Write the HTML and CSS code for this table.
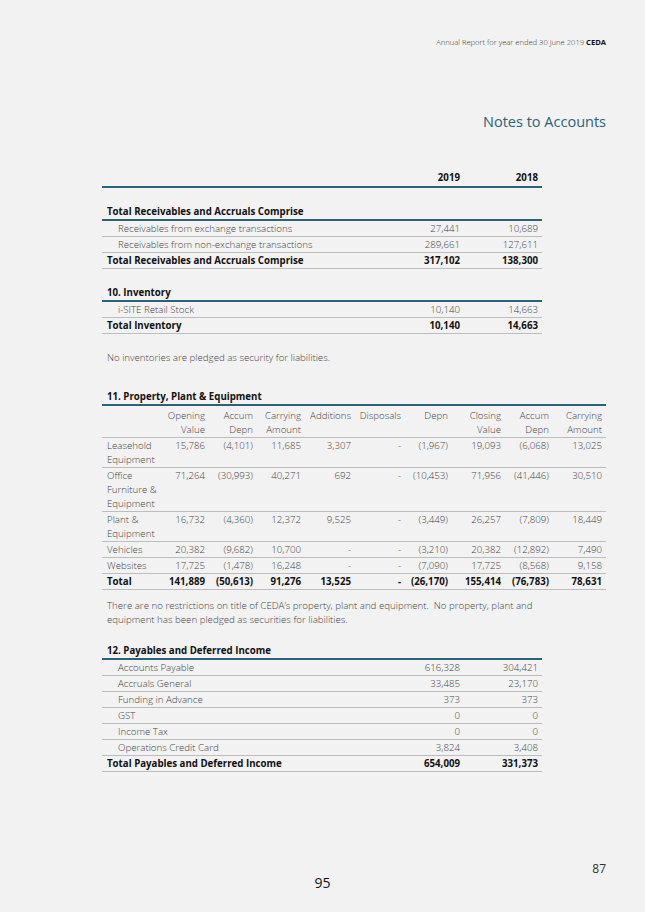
FILE: index.html
```html
<!DOCTYPE html>
<html>
<head>
<meta charset="utf-8">
<link rel="stylesheet" href="styles.css">
</head>
<body>
<div class="page">
  <div class="running">Annual Report for year ended 30 June 2019 <b>CEDA</b></div>
  <h1 class="title">Notes to Accounts</h1>

  <table class="fin first">
    <colgroup><col class="c-label"><col class="c-num"><col class="c-num"></colgroup>
    <thead>
      <tr class="yr"><th></th><th>2019</th><th>2018</th></tr>
    </thead>
  </table>

  <div class="sec-title gap-a">Total Receivables and Accruals Comprise</div>
  <table class="fin">
    <colgroup><col class="c-label"><col class="c-num"><col class="c-num"></colgroup>
    <tbody>
      <tr><td class="ind">Receivables from exchange transactions</td><td>27,441</td><td>10,689</td></tr>
      <tr><td class="ind">Receivables from non-exchange transactions</td><td>289,661</td><td>127,611</td></tr>
      <tr class="tot"><td>Total Receivables and Accruals Comprise</td><td>317,102</td><td>138,300</td></tr>
    </tbody>
  </table>

  <div class="sec-title gap-b">10. Inventory</div>
  <table class="fin">
    <colgroup><col class="c-label"><col class="c-num"><col class="c-num"></colgroup>
    <tbody>
      <tr><td class="ind">i-SITE Retail Stock</td><td>10,140</td><td>14,663</td></tr>
      <tr class="tot"><td>Total Inventory</td><td>10,140</td><td>14,663</td></tr>
    </tbody>
  </table>

  <p class="note note-a">No inventories are pledged as security for liabilities.</p>

  <div class="sec-title wide gap-c">11. Property, Plant &amp; Equipment</div>
  <table class="ppe">
    <colgroup>
      <col class="p-label"><col class="p49"><col class="p48"><col class="p48"><col class="p50"><col class="p50"><col class="p47"><col class="p53"><col class="p48"><col class="p53">
    </colgroup>
    <thead>
      <tr><th></th><th>Opening<br>Value</th><th>Accum<br>Depn</th><th>Carrying<br>Amount</th><th>Additions</th><th>Disposals</th><th>Depn</th><th>Closing<br>Value</th><th>Accum<br>Depn</th><th>Carrying<br>Amount</th></tr>
    </thead>
    <tbody>
      <tr><td>Leasehold Equipment</td><td>15,786</td><td>(4,101)</td><td>11,685</td><td>3,307</td><td>-</td><td>(1,967)</td><td>19,093</td><td>(6,068)</td><td>13,025</td></tr>
      <tr><td>Office Furniture &amp; Equipment</td><td>71,264</td><td>(30,993)</td><td>40,271</td><td>692</td><td>-</td><td>(10,453)</td><td>71,956</td><td>(41,446)</td><td>30,510</td></tr>
      <tr><td>Plant &amp; Equipment</td><td>16,732</td><td>(4,360)</td><td>12,372</td><td>9,525</td><td>-</td><td>(3,449)</td><td>26,257</td><td>(7,809)</td><td>18,449</td></tr>
      <tr><td>Vehicles</td><td>20,382</td><td>(9,682)</td><td>10,700</td><td>-</td><td>-</td><td>(3,210)</td><td>20,382</td><td>(12,892)</td><td>7,490</td></tr>
      <tr><td>Websites</td><td>17,725</td><td>(1,478)</td><td>16,248</td><td>-</td><td>-</td><td>(7,090)</td><td>17,725</td><td>(8,568)</td><td>9,158</td></tr>
      <tr class="tot"><td>Total</td><td>141,889</td><td>(50,613)</td><td>91,276</td><td>13,525</td><td>-</td><td>(26,170)</td><td>155,414</td><td>(76,783)</td><td>78,631</td></tr>
    </tbody>
  </table>

  <p class="note note-b">There are no restrictions on title of CEDA’s property, plant and equipment.&nbsp; No property, plant and equipment has been pledged as securities for liabilities.</p>

  <div class="sec-title gap-d">12. Payables and Deferred Income</div>
  <table class="fin">
    <colgroup><col class="c-label"><col class="c-num"><col class="c-num"></colgroup>
    <tbody>
      <tr><td class="ind">Accounts Payable</td><td>616,328</td><td>304,421</td></tr>
      <tr><td class="ind">Accruals General</td><td>33,485</td><td>23,170</td></tr>
      <tr><td class="ind">Funding in Advance</td><td>373</td><td>373</td></tr>
      <tr><td class="ind">GST</td><td>0</td><td>0</td></tr>
      <tr><td class="ind">Income Tax</td><td>0</td><td>0</td></tr>
      <tr><td class="ind">Operations Credit Card</td><td>3,824</td><td>3,408</td></tr>
      <tr class="tot"><td>Total Payables and Deferred Income</td><td>654,009</td><td>331,373</td></tr>
    </tbody>
  </table>

  <div class="folios">
    <div class="folio-print">87</div>
    <div class="folio-doc">95</div>
  </div>
</div>
</body>
</html>
```
FILE: styles.css
```css
html, body {
  margin: 0;
  padding: 0;
  background: #f2f2f2;
}
body {
  font-family: "Open Sans", "DejaVu Sans", sans-serif;
  color: #444;
}
.page {
  width: 645px;
  height: 912px;
  box-sizing: border-box;
  padding: 37px 39px 0 102px;
  position: relative;
}
.running {
  text-align: right;
  font-size: 7.6px;
  line-height: 10px;
  font-weight: 300;
  color: #3a3a3a;
}
.running b {
  font-weight: 700;
  color: #111;
}
.title {
  margin: 65px 0 0 0;
  text-align: right;
  font-size: 14.5px;
  line-height: 20px;
  font-weight: 400;
  color: #2d6275;
}
.fin {
  width: 440px;
  border-collapse: separate;
  border-spacing: 0;
  table-layout: fixed;
  font-size: 9.7px;
}
.fin.first {
  margin-top: 38px;
}
.c-label { width: 284px; }
.c-num { width: 78px; }
.fin td, .fin th {
  padding: 0 4px 0 5px;
  height: 15px;
  line-height: 15px;
  border-bottom: 1px solid #bdbdbd;
  text-align: right;
  font-weight: 300;
  color: #444;
  white-space: nowrap;
}
.fin td:first-child, .fin th:first-child { text-align: left; }
.fin td.ind { padding-left: 16px; }
.fin .yr th {
  font-weight: 700;
  color: #111;
  border-bottom: 2px solid #2d6275;
  height: 16px;
  line-height: 16px;
}
.fin .tot td {
  font-weight: 700;
  color: #111;
}
.sec-title {
  width: 440px;
  box-sizing: border-box;
  padding-left: 5px;
  font-size: 9.7px;
  line-height: 14px;
  font-weight: 700;
  color: #111;
  border-bottom: 2px solid #2d6275;
}
.sec-title.wide { width: 504px; }
.gap-a { margin-top: 17px; }
.gap-b { margin-top: 17px; }
.gap-c { margin-top: 25px; }
.gap-d { margin-top: 17px; }
.note {
  margin: 0;
  width: 440px;
  font-size: 9.7px;
  line-height: 14px;
  font-weight: 300;
  color: #444;
  padding-left: 5px;
  box-sizing: border-box;
}
.note-a { margin-top: 17px; }
.note-b { margin-top: 9px; width: 445px; }
.ppe {
  width: 504px;
  border-collapse: separate;
  border-spacing: 0;
  table-layout: fixed;
  font-size: 9.7px;
}
.p-label { width: 58px; }
.p49 { width: 49px; }
.p48 { width: 48px; }
.p50 { width: 50px; }
.p47 { width: 47px; }
.p53 { width: 53px; }
.ppe td, .ppe th {
  padding: 1px 4px 0 5px;
  line-height: 14px;
  vertical-align: top;
  text-align: right;
  font-weight: 300;
  color: #444;
  border-bottom: 1px solid #bdbdbd;
}
.ppe th { padding-top: 3px; }
.ppe td:first-child { text-align: left; padding-right: 0; }
.ppe td:not(:first-child), .ppe th { white-space: nowrap; padding-left: 0; }
.ppe .tot td { font-weight: 700; color: #111; }
.folios {
  position: absolute;
  left: 0;
  right: 0;
  top: 860px;
}
.folio-print {
  position: absolute;
  right: 39px;
  top: 0;
  font-size: 12px;
  line-height: 18px;
  color: #333;
}
.folio-doc {
  position: absolute;
  left: 0;
  right: 0;
  top: 14px;
  text-align: center;
  font-size: 14px;
  line-height: 18px;
  color: #111;
}
```
